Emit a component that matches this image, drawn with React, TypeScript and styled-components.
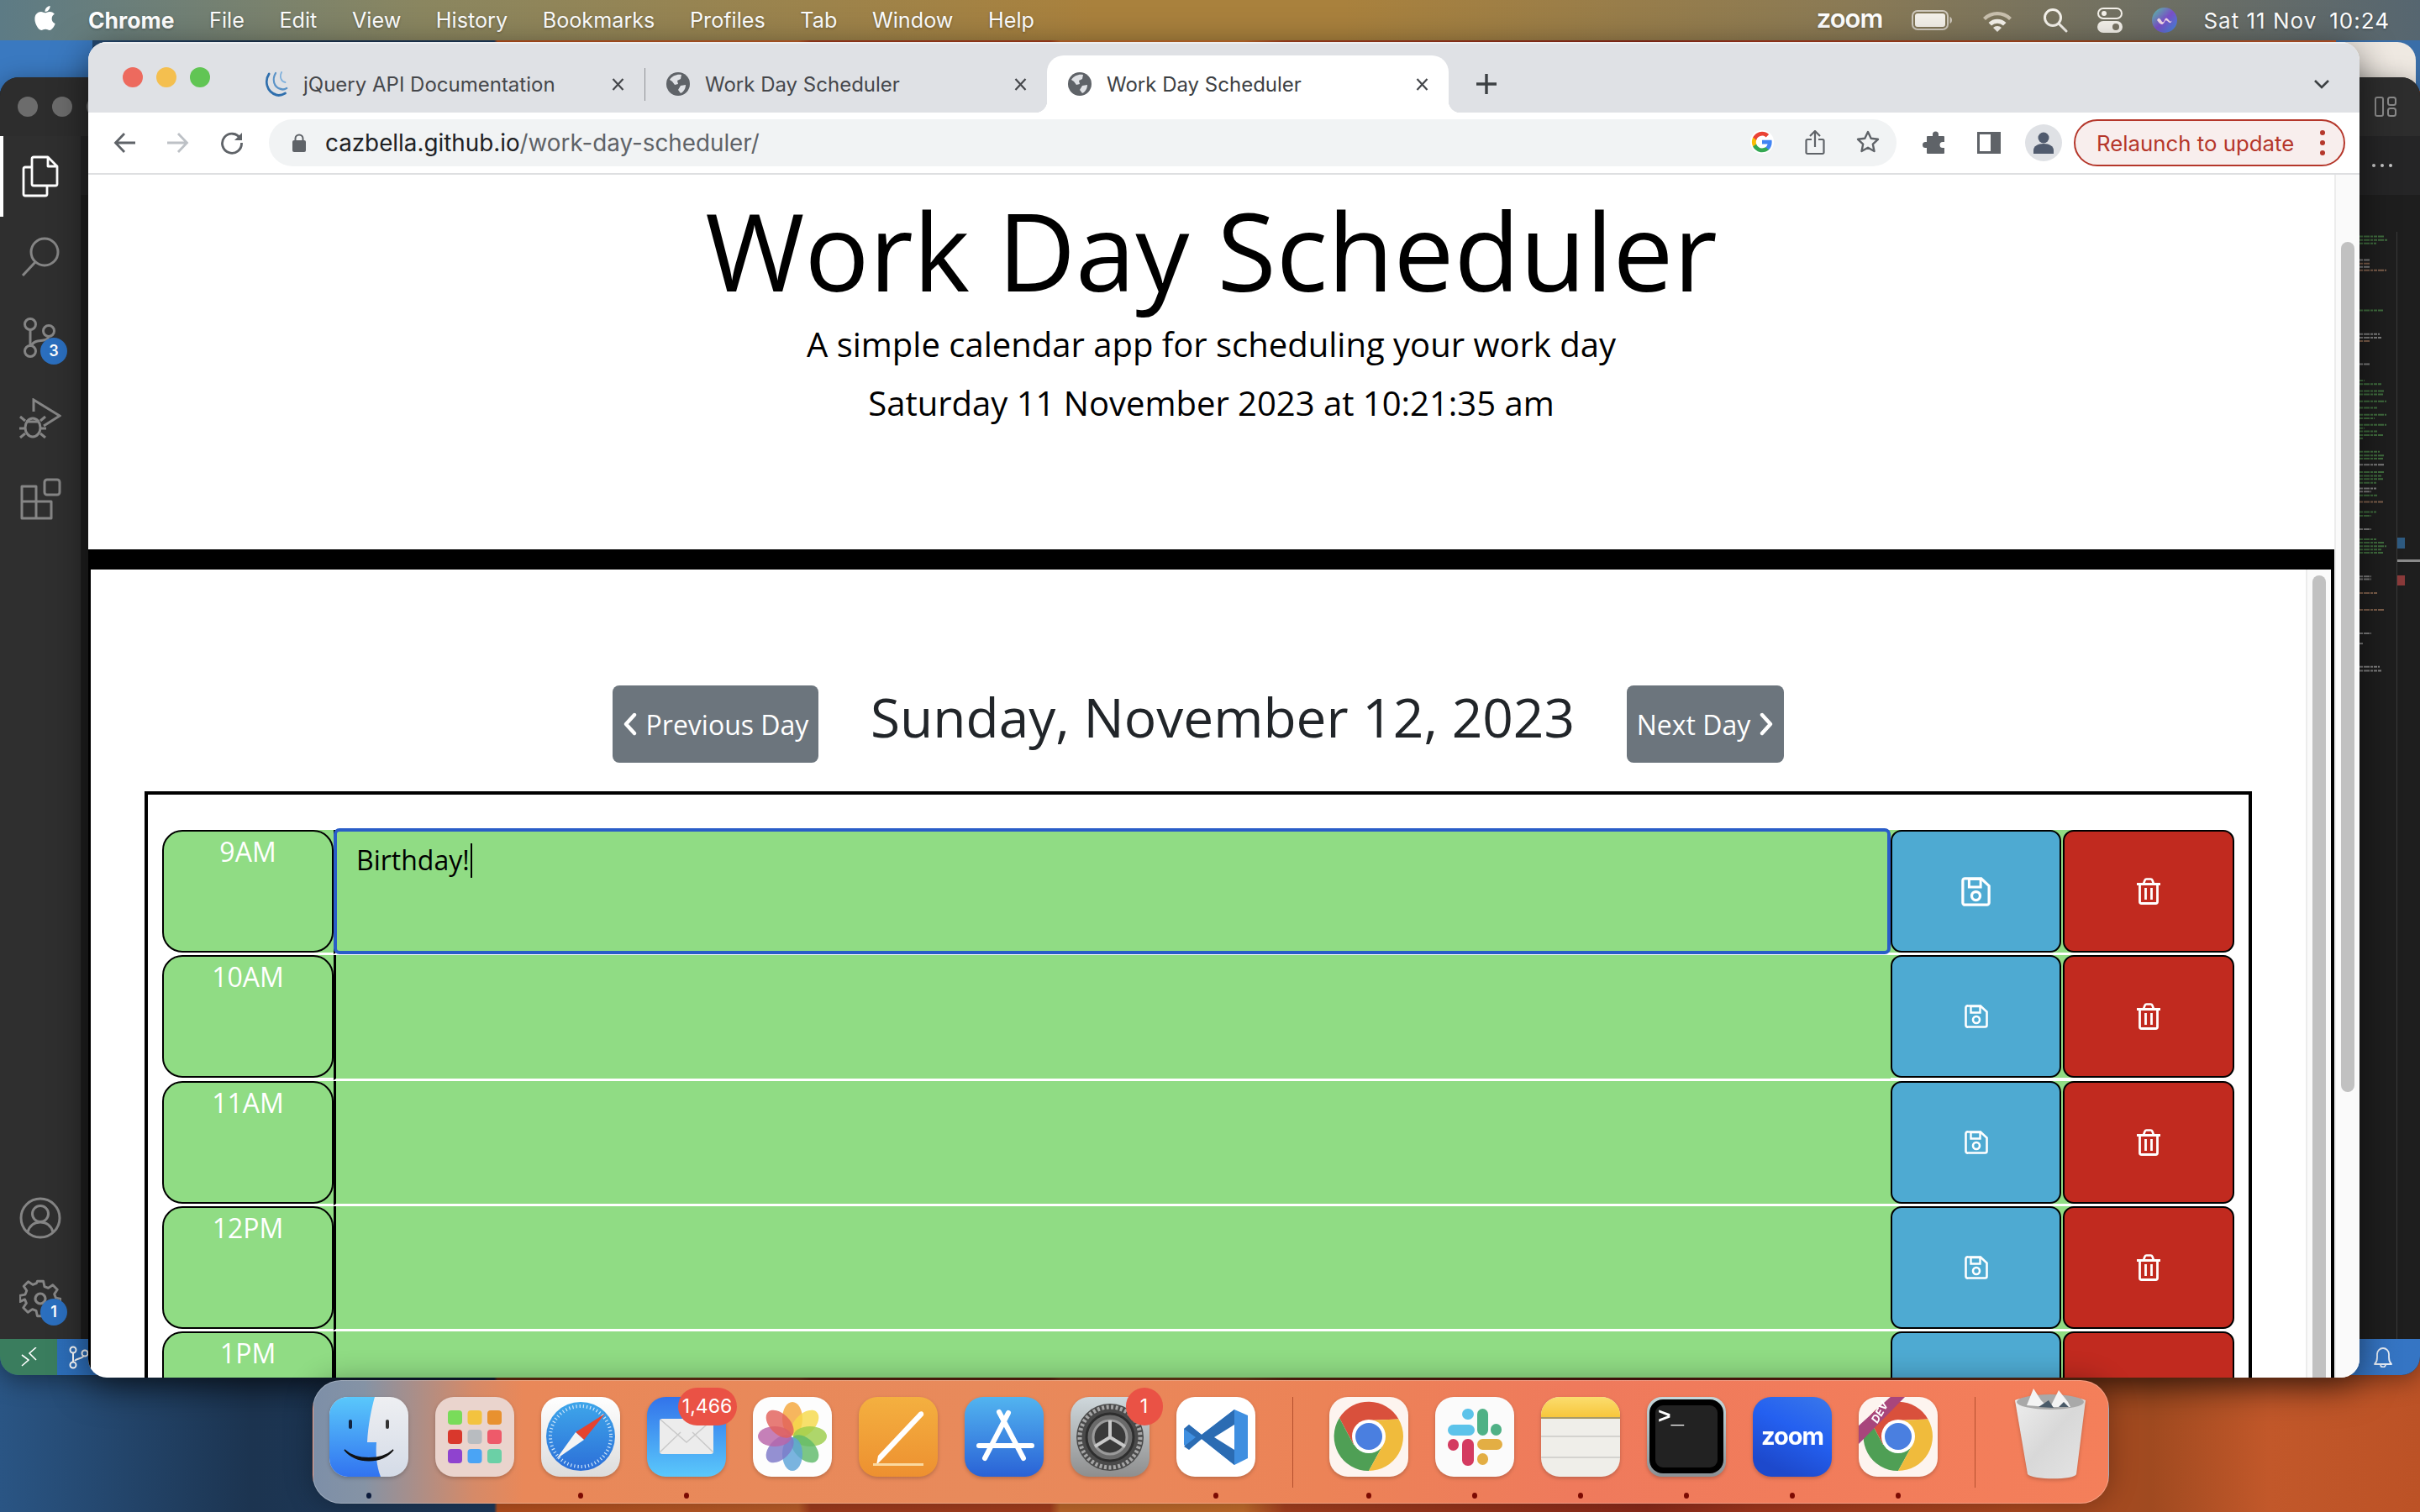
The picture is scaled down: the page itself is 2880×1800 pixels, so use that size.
import React from "react";
import styled, { createGlobalStyle } from "styled-components";
import { FaApple } from "react-icons/fa";

const GREEN = "#90dc84";

const Global = createGlobalStyle`
  html, body { margin: 0; padding: 0; width: 2880px; height: 1800px; overflow: hidden; background: #1e3a5c; }
  #root { width: 2880px; height: 1800px; }
  * { box-sizing: border-box; }
`;

const Desktop = styled.div`
  position: relative;
  width: 2880px;
  height: 1800px;
  overflow: hidden;
  font-family: "Open Sans", sans-serif;
  background:
    linear-gradient(#3a79c0, #3a79c0) 0 48px / 110px 60px no-repeat,
    linear-gradient(#3a6ea8, #3a6ea8) 2780px 48px / 100px 60px no-repeat,
    linear-gradient(90deg, #2a5584 0, #1c3450 300px, #1e3a5c 588px, #b8501e 592px, #c0602a 950px, #a33c1e 965px,
      #a83f1e 1250px, #c26a2c 1262px, #c66e2c 1480px, #a8401f 1530px, #8f2b1a 1960px, #a6381e 2090px, #b04a20 2400px, #a04a20 2560px, #c2582a 2700px, #bc5226 2880px);
`;

/* ---------- menu bar ---------- */
const MenuBar = styled.header`
  height: 48px;
  display: flex;
  align-items: center;
  gap: 41.6px;
  padding: 0 36px 0 105px;
  position: relative;
  background: linear-gradient(90deg, #5d7b85 0, #8a8660 500px, #a9813d 1300px, #a9813d 1600px, #8a7a55 2200px, #566670 2880px);
  font-family: Inter, sans-serif;
  font-size: 25.2px;
  color: #fff;
  text-shadow: 0 1px 3px rgba(0, 0, 0, .3);
`;
const AppleSlot = styled.span`
  position: absolute;
  left: 37px;
  top: 5px;
  font-size: 33px;
  line-height: 36px;
`;
const MenuItem = styled.span<{ $bold?: boolean }>`
  font-weight: ${(p) => (p.$bold ? 700 : 400)};
  font-size: ${(p) => (p.$bold ? "26.5px" : "inherit")};
  white-space: nowrap;
`;
const MenuRight = styled.div`
  margin-left: auto;
  display: flex;
  align-items: center;
  gap: 35px;
`;
const MenuZoom = styled.span`
  font-size: 31px;
  font-weight: 600;
  letter-spacing: -1px;
  line-height: 36px;
  margin-top: -4px;
`;
const MenuClock = styled.div`
  display: flex;
  gap: 15px;
  margin-left: -4px;
  font-size: 26px;
  letter-spacing: 1px;
  white-space: nowrap;
`;
const MenuSvg = styled.svg`
  display: block;
  flex: none;
`;

/* ---------- windows behind ---------- */
const BackWindow = styled.div`
  position: absolute;
  left: 2600px;
  top: 50px;
  width: 275px;
  height: 120px;
  border-radius: 22px;
  background: #efe9e2;
`;
const CodeWindow = styled.section`
  position: absolute;
  left: 0;
  top: 92px;
  width: 2880px;
  height: 1545px;
  display: flex;
  flex-direction: column;
  border-radius: 22px;
  overflow: hidden;
  background: #1e1e1e;
  box-shadow: 0 6px 30px rgba(0, 0, 0, .4);
`;
const CodeTitle = styled.div`
  height: 70px;
  flex: none;
  display: flex;
  align-items: center;
  gap: 17px;
  padding: 0 28px 0 21px;
  background: #2d2d2d;
`;
const CodeLight = styled.span`
  width: 24px;
  height: 24px;
  border-radius: 50%;
  background: #6c6c6c;
`;
const LayoutGlyph = styled.svg`
  margin-left: auto;
  display: block;
`;
const CodeBody = styled.div`
  flex: 1;
  min-height: 0;
  display: flex;
`;
const ActivityBar = styled.nav`
  width: 96px;
  flex: none;
  display: flex;
  flex-direction: column;
  background: #2f2f2f;
`;
const ActivitySpacer = styled.div`
  flex: 1;
`;
const ActivityItem = styled.div<{ $active?: boolean }>`
  position: relative;
  height: 96px;
  flex: none;
  display: flex;
  align-items: center;
  justify-content: center;
  box-shadow: ${(p) => (p.$active ? "inset 4px 0 0 #fff" : "none")};
`;
const ActivityBadge = styled.span`
  position: absolute;
  left: 48px;
  top: 48px;
  width: 32px;
  height: 32px;
  border-radius: 50%;
  background: #2b6fbf;
  color: #fff;
  font-family: Inter, sans-serif;
  font-weight: 600;
  font-size: 18px;
  line-height: 32px;
  text-align: center;
`;
const Editor = styled.div`
  flex: 1;
  min-width: 0;
  display: flex;
  flex-direction: column;
`;
const EditorTabs = styled.div`
  height: 70px;
  flex: none;
  display: flex;
  justify-content: flex-end;
  align-items: center;
  gap: 6px;
  padding-right: 33px;
  background: #252526;
`;
const TabDot = styled.span`
  width: 4px;
  height: 4px;
  border-radius: 50%;
  background: #c8c8c8;
`;
const EditorPane = styled.div`
  flex: 1;
  min-height: 0;
  display: flex;
  justify-content: flex-end;
  background: #1e1e1e;
`;
const Minimap = styled.svg`
  display: block;
  flex: none;
`;
const StatusBar = styled.footer`
  height: 43px;
  flex: none;
  display: flex;
  align-items: center;
  background: linear-gradient(90deg, #2c6db8, #3575c4);
`;
const RemotePill = styled.div`
  width: 68px;
  height: 100%;
  display: flex;
  align-items: center;
  justify-content: center;
  background: #3a7d5e;
`;
const BranchPill = styled.div`
  flex: 1;
  display: flex;
  align-items: center;
  padding-left: 14px;
`;
const BellSlot = styled.div`
  padding-right: 33px;
  display: flex;
`;

/* ---------- chrome ---------- */
const ChromeWindow = styled.main`
  position: absolute;
  left: 105px;
  top: 50px;
  width: 2703px;
  height: 1590px;
  display: flex;
  flex-direction: column;
  overflow: hidden;
  border-radius: 22px;
  background: #fff;
  box-shadow: 0 10px 44px rgba(0, 0, 0, .55);
`;
const TabStrip = styled.div`
  height: 84px;
  flex: none;
  display: flex;
  align-items: flex-end;
  padding-left: 41px;
  background: #dfe1e5;
  border-top: 2px solid #eceef0;
`;
const Lights = styled.div`
  display: flex;
  gap: 16px;
  margin: 0 39px 30px 0;
`;
const Light = styled.span<{ $c: string }>`
  width: 24px;
  height: 24px;
  border-radius: 50%;
  background: ${(p) => p.$c};
`;
const Tab = styled.div<{ $active?: boolean }>`
  position: relative;
  width: 478px;
  height: 68px;
  flex: none;
  display: flex;
  align-items: center;
  gap: 18px;
  padding: 0 24px 0 25px;
  border-radius: 20px 20px 0 0;
  background: ${(p) => (p.$active ? "#fff" : "transparent")};
  color: ${(p) => (p.$active ? "#3c4043" : "#45474b")};
  font-family: Inter, sans-serif;
  font-size: 24px;
  white-space: nowrap;
  ${(p) =>
    p.$active &&
    `
    &::before, &::after { content: ""; position: absolute; bottom: 0; width: 14px; height: 14px; }
    &::before { left: -14px; background: radial-gradient(circle at 0 0, transparent 14px, #fff 14.5px); }
    &::after { right: -14px; background: radial-gradient(circle at 100% 0, transparent 14px, #fff 14.5px); }
  `}
`;
const TabTitle = styled.span`
  flex: 1;
`;
const TabDivider = styled.span`
  width: 1px;
  height: 39px;
  margin-bottom: 14px;
  flex: none;
  background: #8e9094;
`;
const NewTab = styled.div`
  width: 90px;
  height: 68px;
  flex: none;
  display: flex;
  align-items: center;
  justify-content: center;
`;
const TabMenu = styled.div`
  margin-left: auto;
  width: 90px;
  height: 68px;
  display: flex;
  align-items: center;
  justify-content: center;
`;
const Toolbar = styled.div`
  height: 72px;
  flex: none;
  display: flex;
  align-items: center;
  padding: 0 17px 0 11px;
  background: #fff;
`;
const ToolBtn = styled.div`
  width: 64px;
  height: 56px;
  flex: none;
  display: flex;
  align-items: center;
  justify-content: center;
`;
const Omnibox = styled.div`
  width: 1937px;
  height: 56px;
  flex: none;
  margin: 0 14px 0 12px;
  display: flex;
  align-items: center;
  gap: 23px;
  padding: 0 3px 0 28px;
  border-radius: 28px;
  background: #f1f3f4;
  font-family: Inter, sans-serif;
  font-size: 27.8px;
  color: #5f6368;
`;
const UrlHost = styled.span`
  color: #202124;
`;
const OmniActions = styled.div`
  margin-left: auto;
  display: flex;
  gap: 1px;
`;
const OmniBtn = styled.div`
  width: 62px;
  display: flex;
  justify-content: center;
`;
const Avatar = styled.div`
  width: 44px;
  height: 44px;
  margin: 0 14px 0 11px;
  flex: none;
  border-radius: 50%;
  background: #dfe1e5;
  display: flex;
  align-items: center;
  justify-content: center;
`;
const Relaunch = styled.div`
  width: 323px;
  height: 56px;
  flex: none;
  display: flex;
  align-items: center;
  justify-content: space-between;
  padding: 0 22px 0 25px;
  border: 2.5px solid #b5372b;
  border-radius: 28px;
  background: #f8eeed;
  color: #b5372b;
  font-family: Inter, sans-serif;
  font-size: 25.8px;
  white-space: nowrap;
`;
const KebabDots = styled.span`
  display: flex;
  flex-direction: column;
  gap: 6px;
`;
const KebabDot = styled.i`
  width: 6px;
  height: 6px;
  border-radius: 50%;
  background: #b5372b;
`;
const ViewRow = styled.div`
  flex: 1;
  min-height: 0;
  display: flex;
  border-top: 2px solid #dedfe1;
`;
const Page = styled.div`
  flex: 1;
  min-width: 0;
  display: flex;
  flex-direction: column;
`;
const PageHeader = styled.header`
  height: 446px;
  flex: none;
  display: flex;
  flex-direction: column;
  align-items: center;
  color: #000;
`;
const Title = styled.h1`
  margin: 13px 0 5px;
  font-size: 128px;
  font-weight: 400;
  line-height: 154px;
  white-space: nowrap;
`;
const Lead = styled.p`
  margin: 0 0 10px;
  font-size: 40px;
  line-height: 60px;
  white-space: nowrap;
`;
const BlackBar = styled.div`
  height: 24px;
  flex: none;
  background: #000;
`;
const Frame = styled.div`
  flex: 1;
  min-height: 0;
  display: flex;
  border-left: 3px solid #000;
  border-right: 4px solid #000;
`;
const FrameBody = styled.div`
  flex: 1;
  min-width: 0;
  padding: 138px 64px 0;
  overflow: hidden;
`;
const DayNav = styled.div`
  height: 92px;
  margin-bottom: 34px;
  display: flex;
  justify-content: center;
  align-items: center;
  gap: 62px;
`;
const NavButton = styled.button<{ $w: number }>`
  width: ${(p) => p.$w}px;
  height: 92px;
  padding: 0;
  display: flex;
  align-items: center;
  justify-content: center;
  gap: 10px;
  border: 0;
  border-radius: 8px;
  background: #6c757d;
  color: #fff;
  font-family: "Open Sans", sans-serif;
  font-size: 32px;
  white-space: nowrap;
`;
const DayHeading = styled.h2`
  margin: 0 0 16px;
  font-size: 64px;
  font-weight: 400;
  line-height: 80px;
  color: #212529;
  white-space: nowrap;
`;
const Schedule = styled.div`
  border: 4px solid #000;
  border-bottom: 0;
  padding: 42px 17px 0;
`;
const HourRow = styled.div`
  height: 149.3px;
  display: flex;
  background: linear-gradient(90deg, transparent 180px, ${GREEN} 180px, ${GREEN} 2072px, transparent 2072px, transparent 2245px, ${GREEN} 2245px, ${GREEN} 2275px, transparent 2275px) 0 0 / 100% 146px no-repeat;
`;
const TimeBlock = styled.div`
  width: 204px;
  height: 146px;
  flex: none;
  border: 2px solid #000;
  border-radius: 24px;
  background: ${GREEN};
  color: #fff;
  font-size: 32px;
  line-height: 48px;
  text-align: center;
`;
const HourField = styled.div<{ $focused?: boolean }>`
  position: relative;
  flex: 1;
  min-width: 0;
  height: 148.3px;
  padding: 12px 0 0 24px;
  border-left: 3px solid #000;
  border-bottom: 2px solid #fff;
  background: ${GREEN};
  color: #000;
  font-size: 32px;
  line-height: 48px;
  ${(p) =>
    p.$focused &&
    `
    &::after {
      content: "";
      position: absolute;
      inset: -2px 0 -2px -3px;
      border: 4px solid #2a5dc8;
      border-radius: 7px;
    }
  `}
`;
const Caret = styled.span`
  display: inline-block;
  width: 2px;
  height: 41px;
  margin-left: 1px;
  vertical-align: -9px;
  background: #000;
`;
const ActionButton = styled.div<{ $bg: string; $w: number }>`
  width: ${(p) => p.$w}px;
  height: 146px;
  flex: none;
  display: flex;
  align-items: center;
  justify-content: center;
  border: 2px solid #000;
  border-radius: 13px;
  background: ${(p) => p.$bg};
`;
const ActionGap = styled.span`
  width: 2px;
  flex: none;
`;
const Scrollbar = styled.div<{ $top: number }>`
  width: 30px;
  flex: none;
  padding: ${(p) => p.$top}px 0 0 6px;
  background: #fafafa;
  border-left: 2px solid #ececec;
  overflow: hidden;
`;
const ScrollThumb = styled.div<{ $h: number }>`
  width: 16px;
  height: ${(p) => p.$h}px;
  border-radius: 8px;
  background: #c1c1c1;
`;

/* ---------- dock ---------- */
const Dock = styled.footer`
  position: absolute;
  left: 372px;
  top: 1643px;
  width: 2138px;
  height: 147px;
  padding: 18.5px 0 0 18.5px;
  display: flex;
  gap: 32px;
  border-radius: 34px;
  border: 1.5px solid rgba(255, 255, 255, .25);
  background: linear-gradient(90deg, #7d8fa8 0, #8593a5 60px, #a38f8e 110px, #d58a68 190px, #e98859 250px, #e88a5b 800px, #ec8357 1200px, #ef7a5c 1500px, #f47f5a 2138px);
  box-shadow: 0 0 34px rgba(0, 0, 0, .32);
`;
const DockItem = styled.div`
  position: relative;
  width: 94px;
  flex: none;
  display: flex;
  flex-direction: column;
  align-items: center;
`;
const DockSvg = styled.svg`
  display: block;
  flex: none;
  filter: drop-shadow(0 2px 2px rgba(0, 0, 0, .2));
`;
const DockDot = styled.span<{ $c?: string; $off?: boolean }>`
  width: 6px;
  height: 7px;
  margin-top: 19px;
  border-radius: 50%;
  background: ${(p) => (p.$off ? "transparent" : p.$c || "#7c0a02")};
`;
const DockSeparator = styled.span`
  width: 1px;
  height: 108px;
  margin: 0 11px 0 12px;
  flex: none;
  background: #b5502e;
`;
const TrashSlot = styled.div`
  margin: -10px 0 0 4px;
`;
const DockBadge = styled.span<{ $w: number }>`
  position: absolute;
  top: -11px;
  left: ${(p) => (p.$w > 50 ? 37 : 66)}px;
  width: ${(p) => p.$w}px;
  height: 45px;
  border-radius: 23px;
  background: #ea5245;
  color: #fff;
  font-family: Inter, sans-serif;
  font-size: 23px;
  line-height: 45px;
  text-align: center;
`;
const ZoomWord = styled.text`
  font-family: Inter, sans-serif;
  font-weight: 700;
  font-size: 29px;
  letter-spacing: -1px;
  fill: #fff;
`;
const DevWord = styled.text`
  font-family: Inter, sans-serif;
  font-weight: 700;
  font-size: 13px;
  font-style: italic;
  fill: #fff;
`;
const PromptWord = styled.text`
  font-family: "Liberation Mono", monospace;
  font-weight: 700;
  font-size: 26px;
  fill: #fff;
`;

/* ---------- small icons ---------- */
const X = () => (
  <svg width="15" height="15" viewBox="0 0 15 15">
    <path d="M1.5 1 13.5 14M13.5 1 1.5 14" stroke="#45474b" strokeWidth="2.2" fill="none" />
  </svg>
);
const Globe = () => (
  <svg width="28" height="28" viewBox="0 0 28 28">
    <circle cx="14" cy="14" r="14" fill="#5f6368" />
    <path d="M4 9c3-5 9-7 14-6l-1 5-4 2 1 4-4 1-3-4zM17 16l6-1c0 4-2 8-6 10l-3-4z" fill="#dfe1e5" />
  </svg>
);
const JQuery = () => (
  <svg width="29" height="30" viewBox="0 0 33 30" preserveAspectRatio="none">
    <g fill="none" stroke="#2f6fad" strokeLinecap="round">
      <path d="M7 3C1 11 3 24 17 28c4 1 8 0 12-2" strokeWidth="3" />
      <path d="M16 2c-5 7-3 17 7 19 3 1 6 0 8-1" strokeWidth="2.4" stroke="#5b93c7" />
      <path d="M24 1c-3 5-1 11 5 12" strokeWidth="2" stroke="#7fb0dc" />
    </g>
  </svg>
);
const SaveIcon = ({ s }: { s: number }) => (
  <svg width={s} height={s} viewBox="0 0 28 28">
    <path d="M4 1.5h15l7.5 7v16a2 2 0 0 1-2 2h-20.5a2 2 0 0 1-2.500-2V3.500a2 2 0 0 1 2.500-2z" fill="none" stroke="#fff" strokeWidth="2.6" />
    <path d="M7.500 2h11v7.500h-11z" fill="none" stroke="#fff" strokeWidth="2.4" />
    <circle cx="14" cy="18" r="4" fill="none" stroke="#fff" strokeWidth="2.600" />
  </svg>
);
const TrashIcon = () => (
  <svg width="28" height="32" viewBox="0 0 28 32">
    <path d="M0 7.500h28" stroke="#fff" strokeWidth="3" />
    <path d="M8 7l1.500-4c.3-.8 1-1.500 2-1.500h5c1 0 1.700.7 2 1.500l1.500 4" fill="none" stroke="#fff" strokeWidth="2.600" />
    <path d="M3.500 8v20.500c0 1.200 1 2 2 2h17c1 0 2-.8 2-2V8" fill="none" stroke="#fff" strokeWidth="2.800" />
    <path d="M10.500 12v14M17.500 12v14" stroke="#fff" strokeWidth="2.800" />
  </svg>
);
const Chevron = ({ right }: { right?: boolean }) => (
  <svg width="18" height="28" viewBox="0 0 18 28">
    <path d={right ? "M4 3 14 14 4 25" : "M14 3 4 14l10 11"} fill="none" stroke="#fff" strokeWidth="4.400" strokeLinecap="round" strokeLinejoin="round" />
  </svg>
);

const gray = "#858585";
const ActFiles = () => (
  <svg width="44" height="50" viewBox="0 0 44 50" fill="none" stroke="#fff" strokeWidth="2.800">
    <path d="M14 2h17l11 11v21a2 2 0 0 1-2 2H14a2 2 0 0 1-2-2V4a2 2 0 0 1 2-2zM31 2v11h11" strokeLinejoin="round" />
    <path d="M12 14H4a2 2 0 0 0-2 2v30a2 2 0 0 0 2 2h24a2 2 0 0 0 2-2v-10" />
  </svg>
);
const ActSearch = () => (
  <svg width="46" height="48" viewBox="0 0 46 48" fill="none" stroke={gray} strokeWidth="3">
    <circle cx="28" cy="18" r="16" />
    <path d="M17 30 2 46" />
  </svg>
);
const ActScm = () => (
  <svg width="44" height="48" viewBox="0 0 44 48" fill="none" stroke={gray} strokeWidth="3">
    <circle cx="10" cy="8" r="6.500" />
    <circle cx="10" cy="40" r="6.500" />
    <circle cx="32" cy="16" r="6.500" />
    <path d="M10 15v18M12 33c2-6 10-5 14-6 5-1 6-3 6-5" />
  </svg>
);
const ActDebug = () => (
  <svg width="50" height="48" viewBox="0 0 50 48" fill="none" stroke={gray} strokeWidth="3">
    <path d="M17 16V2l31 19-19 12" />
    <ellipse cx="16" cy="35" rx="9" ry="11" />
    <path d="M7 27 1 22M25 27l6-5M7 36H0M25 36h7M7 42l-6 5M25 42l6 5M8 28h16" />
  </svg>
);
const ActExt = () => (
  <svg width="50" height="50" viewBox="0 0 50 50" fill="none" stroke={gray} strokeWidth="3" strokeLinejoin="round">
    <rect x="30" y="2" width="18" height="18" rx="3" />
    <path d="M3 10h17v18h18v20H3zM3 28h17v20" />
  </svg>
);
const ActAccount = () => (
  <svg width="50" height="50" viewBox="0 0 50 50" fill="none" stroke={gray} strokeWidth="3">
    <circle cx="25" cy="25" r="23" />
    <circle cx="25" cy="20" r="9.500" />
    <path d="M10 42c2-8 8-12 15-12s13 4 15 12" />
  </svg>
);
const ActGear = () => (
  <svg width="50" height="50" viewBox="0 0 50 50" fill="none" stroke={gray} strokeWidth="3.200" strokeLinejoin="round">
    <path d="M21 2h8l1.500 7 5 2 6-4 6 6-4 6 2 5 7 1.500v8l-7 1.500-2 5 4 6-6 6-6-4-5 2L29 48h-8l-1.500-7-5-2-6 4-6-6 4-6-2-5L-2 29v-8l7-1.500 2-5-4-6 6-6 6 4 5-2z" transform="translate(2.500 2.500) scale(.9)" />
    <circle cx="25" cy="25" r="6" />
  </svg>
);

const minimapSource: [number, number, string][] = [
  [498, 30, "g"], [507, 33, "g"], [515, 20, "g"], [556, 12, "w"], [565, 12, "o"], [573, 12, "w"], [581, 32, "o"], [680, 28, "g"],
  [738, 24, "w"], [747, 26, "w"], [755, 12, "o"], [812, 12, "w"], [852, 6, "g"], [861, 26, "g"], [878, 30, "g"], [886, 28, "g"],
  [903, 32, "g"], [919, 22, "g"], [936, 32, "g"], [945, 18, "g"], [961, 32, "g"], [969, 6, "g"], [977, 22, "g"], [986, 28, "g"],
  [994, 4, "g"], [1027, 24, "g"], [1036, 30, "g"], [1044, 28, "g"], [1059, 30, "w"], [1077, 30, "g"], [1086, 26, "g"], [1094, 28, "g"],
  [1103, 20, "g"], [1117, 20, "w"], [1125, 14, "w"], [1134, 22, "g"], [1150, 28, "o"], [1175, 20, "g"], [1184, 14, "g"], [1217, 14, "w"],
  [1242, 20, "g"], [1250, 30, "g"], [1259, 32, "g"], [1267, 26, "g"], [1275, 28, "g"], [1333, 14, "w"], [1340, 14, "w"], [1374, 22, "o"],
  [1415, 30, "o"], [1473, 14, "w"], [1498, 5, "w"], [1555, 24, "w"], [1565, 26, "w"],
];
const minimapColor: Record<string, string> = { g: "#4f8f4c", w: "#a9a9a9", o: "#a67b5f" };

const MinimapDrawing = () => (
  <Minimap width="72" height="1362" viewBox="0 0 72 1362">
    {minimapSource.map(([z, w, c], i) => (
      <path key={i} d={`M0 ${40 + z / 2.063 - 232}h${w}`} stroke={minimapColor[c]} strokeWidth="2" strokeDasharray="4 1 7 1 3 1" opacity=".7" />
    ))}
    <path d="M44.500 44V1362" stroke="#3a3a3a" strokeWidth="1" />
    <rect x="45" y="408" width="9" height="13" fill="#2e5a80" />
    <rect x="45" y="434" width="27" height="3" fill="#8a8a8a" />
    <rect x="45" y="453" width="9" height="12" fill="#8a3a3a" />
  </Minimap>
);

/* ---------- dock icons ---------- */
const sharedSize = { width: 94, height: 95, viewBox: "0 0 94 95" };

const FinderIcon = () => (
  <DockSvg {...sharedSize}>
    <defs>
      <linearGradient id="fa" x1="0" y1="0" x2="0" y2="1"><stop offset="0" stopColor="#5ac8fb" /><stop offset="1" stopColor="#3173f0" /></linearGradient>
      <linearGradient id="fb" x1="0" y1="0" x2="0" y2="1"><stop offset="0" stopColor="#eeeff2" /><stop offset="1" stopColor="#d4dbe7" /></linearGradient>
      <clipPath id="fc"><rect width="94" height="95" rx="22" /></clipPath>
    </defs>
    <g clipPath="url(#fc)">
      <rect width="94" height="95" fill="url(#fb)" />
      <path d="M0 0h54c-4 14-8 34-9 54h11c-1 14 0 28 5 41H0z" fill="url(#fa)" />
    </g>
    <rect x="23" y="27" width="4" height="11" rx="2" fill="#12233f" />
    <rect x="67" y="27" width="4" height="11" rx="2" fill="#333" />
    <path d="M18 63c14 17 44 17 58 0-14 13-44 13-58 0z" fill="#111" stroke="#111" strokeWidth="1.600" />
  </DockSvg>
);
const LaunchpadIcon = () => {
  const colors = ["#79dc5a", "#f3c33f", "#e8912f", "#d9382c", "#b8bcc0", "#ee5a6a", "#8f43cf", "#4aa4f5", "#6bd0a6"];
  return (
    <DockSvg {...sharedSize}>
      <rect width="94" height="95" rx="22" fill="#ead4cd" />
      {colors.map((c, i) => (
        <rect key={c} x={15 + (i % 3) * 23.500} y={16 + Math.floor(i / 3) * 23} width="17" height="17" rx="4" fill={c} />
      ))}
    </DockSvg>
  );
};
const SafariIcon = () => (
  <DockSvg {...sharedSize}>
    <defs>
      <linearGradient id="sa" x1="0" y1="0" x2="0" y2="1"><stop offset="0" stopColor="#fff" /><stop offset="1" stopColor="#dcdcdc" /></linearGradient>
      <linearGradient id="sb" x1="0" y1="0" x2="0" y2="1"><stop offset="0" stopColor="#3ea6ea" /><stop offset="1" stopColor="#2c6fd8" /></linearGradient>
    </defs>
    <rect width="94" height="95" rx="22" fill="url(#sa)" />
    <circle cx="47" cy="47" r="41" fill="url(#sb)" />
    <circle cx="47" cy="47" r="36" fill="none" stroke="#cfe6fa" strokeWidth="4" strokeDasharray="1.200 3" />
    <path d="M76 20 51 51 41 42z" fill="#e5432f" />
    <path d="M18 74 41 42 51 51z" fill="#f4f4f4" />
  </DockSvg>
);
const MailIcon = () => (
  <DockSvg {...sharedSize}>
    <defs>
      <linearGradient id="ma" x1="0" y1="0" x2="0" y2="1"><stop offset="0" stopColor="#3273ea" /><stop offset="1" stopColor="#5ac8fb" /></linearGradient>
    </defs>
    <rect width="94" height="95" rx="22" fill="url(#ma)" />
    <rect x="15" y="26" width="64" height="42" rx="3" fill="#ececec" />
    <path d="M15 66 40 42M79 66 54 42M16 27l31 27 31-27" fill="none" stroke="#c9c9c9" strokeWidth="1.500" />
  </DockSvg>
);
const PhotosIcon = () => {
  const petals = ["#f4a63a", "#f5d94a", "#9ccd4b", "#5fb96a", "#5da3d8", "#7d78c8", "#b864a8", "#e2605a"];
  return (
    <DockSvg {...sharedSize}>
      <rect width="94" height="95" rx="22" fill="#fdfdfd" />
      {petals.map((c, i) => (
        <ellipse key={c} cx="47" cy="26" rx="12" ry="20" fill={c} opacity=".82" transform={`rotate(${i * 45} 47 47)`} />
      ))}
    </DockSvg>
  );
};
const PagesIcon = () => (
  <DockSvg {...sharedSize}>
    <defs>
      <linearGradient id="pa" x1="0" y1="0" x2="0" y2="1"><stop offset="0" stopColor="#f4b040" /><stop offset="1" stopColor="#ed9030" /></linearGradient>
    </defs>
    <rect width="94" height="95" rx="22" fill="url(#pa)" />
    <path d="M72 18c3-2 6 0 5 4L29 73l-8 8 2-11z" fill="#fff" />
    <path d="M17 79h60v3H17z" fill="#fbd9a0" />
  </DockSvg>
);
const AppStoreIcon = () => (
  <DockSvg {...sharedSize}>
    <defs>
      <linearGradient id="aa" x1="0" y1="0" x2="0" y2="1"><stop offset="0" stopColor="#52b4f0" /><stop offset="1" stopColor="#2a62d6" /></linearGradient>
    </defs>
    <rect width="94" height="95" rx="22" fill="url(#aa)" />
    <path d="M41 18 70 73M52 19 24 73M17 58h63" fill="none" stroke="#fff" strokeWidth="6" strokeLinecap="round" />
  </DockSvg>
);
const SettingsIcon = () => (
  <DockSvg {...sharedSize}>
    <defs>
      <linearGradient id="ga" x1="0" y1="0" x2="0" y2="1"><stop offset="0" stopColor="#cfd8dc" /><stop offset="1" stopColor="#8e8e8e" /></linearGradient>
    </defs>
    <rect width="94" height="95" rx="22" fill="url(#ga)" />
    <circle cx="47" cy="48" r="40" fill="#4a4a4a" />
    <circle cx="47" cy="48" r="36" fill="none" stroke="#a6a6a6" strokeWidth="5" strokeDasharray="3 2.500" />
    <circle cx="47" cy="48" r="28" fill="#6a6a6a" stroke="#2e2e2e" strokeWidth="3" />
    <circle cx="47" cy="48" r="20" fill="#3a3a3a" stroke="#9a9a9a" strokeWidth="3" />
    <path d="M47 48V28M47 48 29 59M47 48l18 11" stroke="#c9c9c9" strokeWidth="4" />
  </DockSvg>
);
const VsCodeIcon = () => (
  <DockSvg {...sharedSize}>
    <rect width="94" height="95" rx="22" fill="#fff" />
    <path d="M69 15 85 22v51l-16 8-39-31-15 12-6-5V38l6-5 15 12z" fill="#3f8fe0" />
    <path d="M69 15 30 45 15 33l-6 5 14 10-14 11 6 4 15-13 39 31z" fill="#2b6cb3" />
    <path d="M69 33 45 48l24 15z" fill="#fff" />
  </DockSvg>
);
const ChromeMark = () => (
  <>
    <path d="M82.500 26.500A41 41 0 0 0 12 25l17 32 18-29z" fill="#d9503c" />
    <path d="M12 25A41 41 0 0 0 47 88l17-31H29z" fill="#4f9f55" />
    <path d="M82.500 26.500A41 41 0 0 1 47 88l17-31-17-29z" fill="#f0bb3c" />
    <circle cx="47" cy="47" r="20" fill="#fff" />
    <circle cx="47" cy="47" r="16" fill="#4a7fe0" />
  </>
);
const ChromeIcon = () => (
  <DockSvg {...sharedSize}>
    <rect width="94" height="95" rx="22" fill="#fdf4ef" />
    <ChromeMark />
  </DockSvg>
);
const SlackIcon = () => (
  <DockSvg {...sharedSize}>
    <rect width="94" height="95" rx="22" fill="#fbfbfb" />
    <rect x="50" y="14" width="13" height="32" rx="6.500" fill="#4fb186" />
    <rect x="66" y="32" width="13" height="14" rx="6.500" fill="#4fb186" />
    <rect x="15" y="33" width="32" height="13" rx="6.500" fill="#5cc3ea" />
    <rect x="32" y="14" width="14" height="13" rx="6.500" fill="#5cc3ea" />
    <rect x="32" y="50" width="14" height="32" rx="6.500" fill="#d43b60" />
    <rect x="15" y="50" width="13" height="14" rx="6.500" fill="#d43b60" />
    <rect x="50" y="50" width="30" height="13" rx="6.500" fill="#e3ae44" />
    <rect x="50" y="67" width="13" height="14" rx="6.500" fill="#e3ae44" />
  </DockSvg>
);
const NotesIcon = () => (
  <DockSvg {...sharedSize}>
    <defs>
      <linearGradient id="na" x1="0" y1="0" x2="0" y2="1"><stop offset="0" stopColor="#fbdd6e" /><stop offset="1" stopColor="#f7c63c" /></linearGradient>
      <clipPath id="nb"><rect width="94" height="95" rx="22" /></clipPath>
    </defs>
    <g clipPath="url(#nb)">
      <rect width="94" height="95" fill="#efeee9" />
      <rect width="94" height="24" fill="url(#na)" />
      <rect y="24" width="94" height="2" fill="#a89a68" />
      <rect y="46" width="94" height="2" fill="#d4d3cf" />
      <rect y="71" width="94" height="2" fill="#d4d3cf" />
    </g>
  </DockSvg>
);
const TerminalIcon = () => (
  <DockSvg {...sharedSize}>
    <defs>
      <linearGradient id="ta" x1="0" y1="0" x2="0" y2="1"><stop offset="0" stopColor="#c4d8dc" /><stop offset="1" stopColor="#8a9094" /></linearGradient>
    </defs>
    <rect width="94" height="95" rx="18" fill="url(#ta)" />
    <rect x="3" y="3" width="88" height="88" rx="16" fill="#000" />
    <rect x="10" y="10" width="74" height="74" rx="9" fill="#222" />
    <PromptWord x="13" y="31">&gt;_</PromptWord>
  </DockSvg>
);
const ZoomIcon = () => (
  <DockSvg {...sharedSize}>
    <defs>
      <linearGradient id="za" x1="1" y1="0" x2="0.500" y2="1"><stop offset="0" stopColor="#3a78ea" /><stop offset=".5" stopColor="#2460f0" /><stop offset="1" stopColor="#1d49cc" /></linearGradient>
    </defs>
    <rect width="94" height="95" rx="22" fill="url(#za)" />
    <ZoomWord x="47" y="57" textAnchor="middle">zoom</ZoomWord>
  </DockSvg>
);
const ChromeDevIcon = () => (
  <DockSvg {...sharedSize}>
    <defs><clipPath id="cd"><rect width="94" height="95" rx="22" /></clipPath></defs>
    <rect width="94" height="95" rx="22" fill="#fdf4ef" />
    <ChromeMark />
    <g clipPath="url(#cd)">
      <path d="M40-2h17L-2 58V36z" fill="#a8467c" />
      <DevWord x="28" y="13" transform="rotate(-60 20 24) translate(-14 17)">DEV</DevWord>
    </g>
  </DockSvg>
);
const TrashBinIcon = () => (
  <DockSvg width="84" height="110" viewBox="0 0 84 110">
    <defs>
      <linearGradient id="tb" x1="0" y1="0" x2="1" y2="1"><stop offset="0" stopColor="#eeeeee" /><stop offset=".5" stopColor="#d8d8d8" /><stop offset="1" stopColor="#e4e4e4" /></linearGradient>
    </defs>
    <path d="M0 14c10-6 74-6 84 0l-11 88c-2 7-52 7-58 0z" fill="url(#tb)" />
    <ellipse cx="42" cy="16" rx="40" ry="9" fill="#a9a9a9" />
    <path d="M14 20 22 0l9 14 8 8zM42 22l10-20 11 14 3 6z" fill="#f4f4f4" />
    <path d="M28 22l12-8 6 9zM52 22l6-6 6 6z" fill="#4a5a68" />
  </DockSvg>
);

const hours = ["9AM", "10AM", "11AM", "12PM", "1PM"];

export default function App() {
  return (
    <>
      <Global />
      <Desktop>
        <MenuBar>
          <AppleSlot><FaApple /></AppleSlot>
          <MenuItem $bold>Chrome</MenuItem>
          {["File", "Edit", "View", "History", "Bookmarks", "Profiles", "Tab", "Window", "Help"].map((m) => (
            <MenuItem key={m}>{m}</MenuItem>
          ))}
          <MenuRight>
            <MenuZoom>zoom</MenuZoom>
            <MenuSvg width="48" height="24" viewBox="0 0 48 24">
              <rect x="1" y="1" width="42" height="22" rx="6" fill="none" stroke="#cfc9bd" strokeWidth="2" />
              <rect x="4" y="4" width="36" height="16" rx="3" fill="#f4f1ea" />
              <path d="M45.500 8v8c1.500-.5 2.500-2 2.500-4s-1-3.500-2.500-4z" fill="#cfc9bd" />
            </MenuSvg>
            <MenuSvg width="38" height="28" viewBox="0 0 38 28">
              <path d="M2 11a24 24 0 0 1 34 0l-3 3a20 20 0 0 0-28 0z" fill="#c9c0ae" />
              <path d="M8.500 17a15 15 0 0 1 21 0l-3.500 3.500a10 10 0 0 0-14 0z" fill="#f4f1ea" />
              <path d="M19 28l-5-5a7 7 0 0 1 10 0z" fill="#f4f1ea" />
            </MenuSvg>
            <MenuSvg width="30" height="30" viewBox="0 0 30 30" fill="none" stroke="#f4f1ea" strokeWidth="3">
              <circle cx="12" cy="12" r="9.500" />
              <path d="M19 19l9 9" strokeLinecap="round" />
            </MenuSvg>
            <MenuSvg width="30" height="30" viewBox="0 0 30 30">
              <rect x="1" y="1" width="28" height="12" rx="6" fill="none" stroke="#f4f1ea" strokeWidth="2" />
              <circle cx="8" cy="7" r="3" fill="#f4f1ea" />
              <rect x="0" y="16" width="30" height="14" rx="7" fill="#f4f1ea" />
              <circle cx="22" cy="23" r="4" fill="#7a7565" />
            </MenuSvg>
            <MenuSvg width="30" height="30" viewBox="0 0 30 30">
              <defs>
                <linearGradient id="si" x1="0" y1="0" x2="1" y2="1">
                  <stop offset="0" stopColor="#57c7a0" /><stop offset=".5" stopColor="#7a4fc8" /><stop offset="1" stopColor="#3c8fe0" />
                </linearGradient>
              </defs>
              <circle cx="15" cy="15" r="15" fill="url(#si)" />
              <path d="M6 15c4-8 6 8 9 0s6 6 9 0c-3 9-6-4-9 2s-6 2-9-2z" fill="#f1d9e8" />
            </MenuSvg>
            <MenuClock>
              <span>Sat 11 Nov</span>
              <span>10:24</span>
            </MenuClock>
          </MenuRight>
        </MenuBar>

        <BackWindow />

        <CodeWindow>
          <CodeTitle>
            <CodeLight /><CodeLight /><CodeLight />
            <LayoutGlyph width="26" height="24" viewBox="0 0 26 24" fill="none" stroke="#8a8a8a" strokeWidth="2">
              <rect x="1" y="1" width="9" height="22" rx="2" />
              <rect x="16" y="1" width="9" height="9" rx="2.500" />
              <rect x="16" y="14" width="9" height="9" rx="2.500" />
            </LayoutGlyph>
          </CodeTitle>
          <CodeBody>
            <ActivityBar>
              <ActivityItem $active><ActFiles /></ActivityItem>
              <ActivityItem><ActSearch /></ActivityItem>
              <ActivityItem><ActScm /><ActivityBadge>3</ActivityBadge></ActivityItem>
              <ActivityItem><ActDebug /></ActivityItem>
              <ActivityItem><ActExt /></ActivityItem>
              <ActivitySpacer />
              <ActivityItem><ActAccount /></ActivityItem>
              <ActivityItem><ActGear /><ActivityBadge>1</ActivityBadge></ActivityItem>
            </ActivityBar>
            <Editor>
              <EditorTabs><TabDot /><TabDot /><TabDot /></EditorTabs>
              <EditorPane><MinimapDrawing /></EditorPane>
            </Editor>
          </CodeBody>
          <StatusBar>
            <RemotePill>
              <svg width="19" height="23" viewBox="0 0 19 23" fill="none" stroke="#fff" strokeWidth="1.600">
                <path d="M1 9l8 6-8 7M18 0l-8 7 8 8" />
              </svg>
            </RemotePill>
            <BranchPill>
              <svg width="24" height="28" viewBox="0 0 24 28" fill="none" stroke="#fff" strokeWidth="2">
                <circle cx="5" cy="5" r="3.500" /><circle cx="5" cy="23" r="3.500" /><circle cx="19" cy="9" r="3.500" />
                <path d="M5 9v10M7 18c2-3 8-2 11-6" />
              </svg>
            </BranchPill>
            <BellSlot>
              <svg width="22" height="25" viewBox="0 0 22 25" fill="none" stroke="#e8eef7" strokeWidth="1.800">
                <path d="M1 21c2-2 3-4 3-8V9a7 7 0 0 1 14 0v4c0 4 1 6 3 8z" strokeLinejoin="round" />
                <path d="M8 21.500a3 3 0 0 0 6 0" />
              </svg>
            </BellSlot>
          </StatusBar>
        </CodeWindow>

        <ChromeWindow>
          <TabStrip>
            <Lights>
              <Light $c="#ed6a5e" /><Light $c="#f4bf4f" /><Light $c="#61c554" />
            </Lights>
            <Tab>
              <JQuery />
              <TabTitle>jQuery API Documentation</TabTitle>
              <X />
            </Tab>
            <TabDivider />
            <Tab>
              <Globe />
              <TabTitle>Work Day Scheduler</TabTitle>
              <X />
            </Tab>
            <Tab $active>
              <Globe />
              <TabTitle>Work Day Scheduler</TabTitle>
              <X />
            </Tab>
            <NewTab>
              <svg width="24" height="24" viewBox="0 0 24 24">
                <path d="M12 0v24M0 12h24" stroke="#3c4043" strokeWidth="3.400" />
              </svg>
            </NewTab>
            <TabMenu>
              <svg width="20" height="12" viewBox="0 0 20 12">
                <path d="M2 2l8 8 8-8" fill="none" stroke="#3c4043" strokeWidth="2.600" />
              </svg>
            </TabMenu>
          </TabStrip>

          <Toolbar>
            <ToolBtn>
              <svg width="26" height="26" viewBox="0 0 26 26" fill="none" stroke="#5f6368" strokeWidth="2.800">
                <path d="M26 13H3M13 2 2.500 13 13 24" />
              </svg>
            </ToolBtn>
            <ToolBtn>
              <svg width="26" height="26" viewBox="0 0 26 26" fill="none" stroke="#bdc1c6" strokeWidth="2.800">
                <path d="M0 13h23M13 2l10.500 11L13 24" />
              </svg>
            </ToolBtn>
            <ToolBtn>
              <svg width="28" height="28" viewBox="0 0 28 28" fill="none" stroke="#5f6368" strokeWidth="2.800">
                <path d="M24 9A11.500 11.500 0 1 0 25.500 14" />
                <path d="M26 2v9h-9z" fill="#5f6368" stroke="none" />
              </svg>
            </ToolBtn>
            <Omnibox>
              <svg width="16" height="22" viewBox="0 0 16 22">
                <rect x="0" y="8" width="16" height="14" rx="2" fill="#5f6368" />
                <path d="M3.500 9V6a4.500 4.500 0 0 1 9 0v3" fill="none" stroke="#5f6368" strokeWidth="2" />
              </svg>
              <span><UrlHost>cazbella.github.io</UrlHost>/work-day-scheduler/</span>
              <OmniActions>
                <OmniBtn>
                  <svg width="28" height="28" viewBox="0 0 48 48">
                    <circle cx="24" cy="24" r="24" fill="#fff" />
                    <path d="M44 24.500c0-1.500-.1-2.800-.4-4.200H24v8h11.300c-.5 2.600-2 4.800-4.200 6.300v5.200h6.700c4-3.600 6.200-9 6.200-15.300z" fill="#4285f4" />
                    <path d="M24 45c5.600 0 10.300-1.900 13.800-5.100l-6.700-5.200c-1.900 1.300-4.300 2-7.100 2-5.400 0-10-3.700-11.700-8.600H5.400v5.300C8.800 39.900 15.900 45 24 45z" fill="#34a853" />
                    <path d="M12.300 28.100c-.9-2.600-.9-5.500 0-8.100v-5.300H5.400c-2.900 5.800-2.900 12.800 0 18.600z" fill="#fbbc05" />
                    <path d="M24 11.300c3 0 5.800 1 8 3.100l5.900-5.900C34.300 5 29.300 3 24 3 15.900 3 8.800 8.100 5.400 14.700l6.900 5.300c1.700-5 6.300-8.700 11.700-8.700z" fill="#ea4335" />
                  </svg>
                </OmniBtn>
                <OmniBtn>
                  <svg width="24" height="30" viewBox="0 0 24 30" fill="none" stroke="#5f6368" strokeWidth="2.200">
                    <path d="M8 11H3a1.500 1.500 0 0 0-1.500 1.500v14A1.500 1.500 0 0 0 3 28h18a1.500 1.500 0 0 0 1.500-1.500v-14A1.500 1.500 0 0 0 21 11h-5M12 20V2M6 7l6-6 6 6" />
                  </svg>
                </OmniBtn>
                <OmniBtn>
                  <svg width="28" height="28" viewBox="0 0 28 28" fill="none" stroke="#5f6368" strokeWidth="2.400" strokeLinejoin="round">
                    <path d="M14 2l3.700 7.800 8.300 1-6.200 5.800 1.700 8.400-7.500-4.200L6.500 25l1.700-8.400L2 10.800l8.300-1z" />
                  </svg>
                </OmniBtn>
              </OmniActions>
            </Omnibox>
            <ToolBtn>
              <svg width="30" height="30" viewBox="0 0 30 30" fill="#5f6368">
                <path d="M6 7h6V5a3.500 3.500 0 0 1 7 0v2h6a1 1 0 0 1 1 1v6h-2a3.500 3.500 0 0 0 0 7h2v6a1 1 0 0 1-1 1H6a1 1 0 0 1-1-1v-6H3.500a3.500 3.500 0 0 1 0-7H5V8a1 1 0 0 1 1-1z" />
              </svg>
            </ToolBtn>
            <ToolBtn>
              <svg width="28" height="26" viewBox="0 0 28 26">
                <path d="M0 0h28v26H0zM3 3v20h13V3z" fill="#5f6368" fillRule="evenodd" />
              </svg>
            </ToolBtn>
            <Avatar>
              <svg width="24" height="26" viewBox="0 0 24 26" fill="#505b6e">
                <circle cx="12" cy="7" r="6.500" />
                <path d="M0 26v-4c0-5 5-8 12-8s12 3 12 8v4z" />
              </svg>
            </Avatar>
            <Relaunch>
              Relaunch to update
              <KebabDots><KebabDot /><KebabDot /><KebabDot /></KebabDots>
            </Relaunch>
          </Toolbar>

          <ViewRow>
            <Page>
              <PageHeader>
                <Title>Work Day Scheduler</Title>
                <Lead>A simple calendar app for scheduling your work day</Lead>
                <Lead>Saturday 11 November 2023 at 10:21:35 am</Lead>
              </PageHeader>
              <BlackBar />
              <Frame>
                <FrameBody>
                  <DayNav>
                    <NavButton $w={245}><Chevron />Previous Day</NavButton>
                    <DayHeading>Sunday, November 12, 2023</DayHeading>
                    <NavButton $w={187}>Next Day<Chevron right /></NavButton>
                  </DayNav>
                  <Schedule>
                    {hours.map((h, i) => (
                      <HourRow key={h}>
                        <TimeBlock>{h}</TimeBlock>
                        <HourField $focused={i === 0}>
                          {i === 0 && <>Birthday!<Caret /></>}
                        </HourField>
                        <ActionButton $bg="#4eaad2" $w={203}><SaveIcon s={i === 0 ? 35 : 28} /></ActionButton>
                        <ActionGap />
                        <ActionButton $bg="#c12a1f" $w={204}><TrashIcon /></ActionButton>
                      </HourRow>
                    ))}
                  </Schedule>
                </FrameBody>
                <Scrollbar $top={7}><ScrollThumb $h={1200} /></Scrollbar>
              </Frame>
            </Page>
            <Scrollbar $top={80}><ScrollThumb $h={1012} /></Scrollbar>
          </ViewRow>
        </ChromeWindow>

        <Dock>
          <DockItem><FinderIcon /><DockDot $c="#0c1b3c" /></DockItem>
          <DockItem><LaunchpadIcon /><DockDot $off /></DockItem>
          <DockItem><SafariIcon /><DockDot /></DockItem>
          <DockItem><MailIcon /><DockBadge $w={70}>1,466</DockBadge><DockDot /></DockItem>
          <DockItem><PhotosIcon /><DockDot $off /></DockItem>
          <DockItem><PagesIcon /><DockDot $off /></DockItem>
          <DockItem><AppStoreIcon /><DockDot $off /></DockItem>
          <DockItem><SettingsIcon /><DockBadge $w={44}>1</DockBadge><DockDot $off /></DockItem>
          <DockItem><VsCodeIcon /><DockDot /></DockItem>
          <DockSeparator />
          <DockItem><ChromeIcon /><DockDot /></DockItem>
          <DockItem><SlackIcon /><DockDot /></DockItem>
          <DockItem><NotesIcon /><DockDot /></DockItem>
          <DockItem><TerminalIcon /><DockDot /></DockItem>
          <DockItem><ZoomIcon /><DockDot /></DockItem>
          <DockItem><ChromeDevIcon /><DockDot /></DockItem>
          <DockSeparator />
          <TrashSlot><TrashBinIcon /></TrashSlot>
        </Dock>
      </Desktop>
    </>
  );
}
